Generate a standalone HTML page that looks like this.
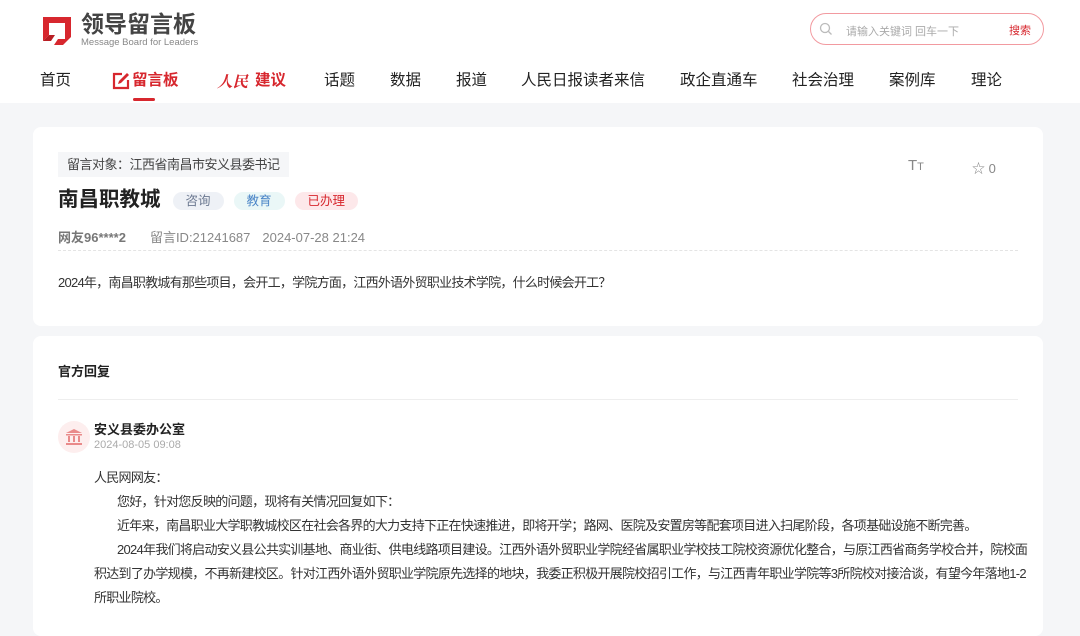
<!DOCTYPE html>
<html><head><meta charset="utf-8"><style>
*{margin:0;padding:0;box-sizing:border-box}
body{width:1080px;height:626px;overflow:hidden;background:#f5f6f8;font-family:"Liberation Sans","Noto Sans CJK SC",sans-serif;color:#333;position:relative}
.hd{position:absolute;left:0;top:0;width:1080px;height:103px;background:#fff}
.a{position:absolute;white-space:nowrap}
.nav{top:71px;font-size:15.5px;color:#222;line-height:20px}
.card{position:absolute;left:33px;width:1010px;background:#fff;border-radius:8px}
.tag{display:inline-block;height:18px;line-height:18px;font-size:12.5px;padding:0 13px;border-radius:9px;font-weight:normal;margin-left:10px;vertical-align:middle;letter-spacing:0}
.p{position:absolute;left:94px;width:960px;font-size:13px;line-height:24px;color:#333;letter-spacing:-0.72px;white-space:nowrap}
</style></head><body>
<div class="hd">
<svg class="a" style="left:40px;top:13px" width="34" height="34" viewBox="0 0 34 34"><path d="M3 4h28v20l-8 8H14l4-6h7V10H9v12l-6 6z" fill="#d7272e"/><path d="M3 28l6-6h6l-4 6z" fill="#b81e24"/></svg>
<div class="a" style="left:81px;top:11px;font-size:23px;font-weight:bold;color:#444;line-height:26px">领导留言板</div>
<div class="a" style="left:81px;top:38px;font-size:9.5px;color:#888;line-height:10px">Message Board for Leaders</div>
<div class="a" style="left:810px;top:13px;width:234px;height:32px;border:1px solid #f29aa0;border-radius:16px"></div>
<svg class="a" style="left:819px;top:22px" width="14" height="14" viewBox="0 0 14 14"><circle cx="6" cy="6" r="4.5" fill="none" stroke="#bbb" stroke-width="1.3"/><path d="M9.5 9.5l3 3" stroke="#bbb" stroke-width="1.3"/></svg>
<div class="a" style="left:846px;top:23px;font-size:11px;color:#aaa">请输入关键词 回车一下</div>
<div class="a" style="left:1009px;top:22px;font-size:11px;color:#d7272e">搜索</div>
<div class="a nav" style="left:40px">首页</div>
<svg class="a" style="left:112px;top:72px" width="18" height="18" viewBox="0 0 18 18"><path d="M10 2H2v14h14V8" fill="none" stroke="#d7272e" stroke-width="2.2"/><path d="M15 1l2 2-8 8-3 1 1-3z" fill="#d7272e"/></svg>
<div class="a nav" style="left:132px;color:#d7272e;font-weight:bold">留言板</div>
<div class="a" style="left:133px;top:98px;width:22px;height:3px;background:#d7272e;border-radius:2px"></div>
<div class="a nav" style="left:217px;color:#d7272e;font-weight:bold;font-style:italic;font-family:'Noto Serif CJK SC',serif">人民</div>
<div class="a nav" style="left:255px;color:#d7272e;font-weight:bold">建议</div>
<div class="a nav" style="left:324px">话题</div>
<div class="a nav" style="left:390px">数据</div>
<div class="a nav" style="left:456px">报道</div>
<div class="a nav" style="left:521px">人民日报读者来信</div>
<div class="a nav" style="left:680px">政企直通车</div>
<div class="a nav" style="left:792px">社会治理</div>
<div class="a nav" style="left:889px">案例库</div>
<div class="a nav" style="left:971px">理论</div>
</div>

<div class="card" style="top:127px;height:199px"></div>
<div class="a" style="left:58px;top:152px;height:25px;line-height:25px;padding:0 9px;background:#f5f6f8;font-size:13px;color:#444;letter-spacing:-0.5px">留言对象：江西省南昌市安义县委书记</div>
<div class="a" style="left:908px;top:157px;font-size:15px;color:#888">T<span style="font-size:11px">T</span></div>
<div class="a" style="left:972px;top:158px;font-size:13px;color:#888">☆ 0</div>
<div class="a" style="left:58px;top:185px;font-size:20.5px;font-weight:bold;color:#222;line-height:30px">南昌职教城<span class="tag" style="margin-left:12px;background:#eef1f6;color:#6b7890">咨询</span><span class="tag" style="background:#eaf7f7;color:#4b85c7">教育</span><span class="tag" style="background:#fde8ea;color:#d7272e">已办理</span></div>
<div class="a" style="left:58px;top:227px;font-size:13px;color:#888"><b style="color:#777">网友96****2</b><span style="margin-left:24px">留言ID:21241687</span><span style="margin-left:12px">2024-07-28 21:24</span></div>
<div class="a" style="left:58px;top:250px;width:960px;border-top:1px dashed #e4e4e4"></div>
<div class="a" style="left:58px;top:272px;font-size:13px;color:#333;letter-spacing:-0.75px">2024年，南昌职教城有那些项目，会开工，学院方面，江西外语外贸职业技术学院，什么时候会开工？</div>

<div class="card" style="top:336px;height:300px"></div>
<div class="a" style="left:58px;top:361px;font-size:13px;font-weight:bold;color:#222">官方回复</div>
<div class="a" style="left:58px;top:399px;width:960px;border-top:1px solid #eee"></div>
<div class="a" style="left:58px;top:421px;width:32px;height:32px;border-radius:16px;background:#fdeeee"></div>
<svg class="a" style="left:64px;top:427px" width="20" height="20" viewBox="0 0 20 20" fill="#e98a8a"><path d="M10 2l8 4H2z"/><rect x="2" y="7" width="16" height="1.5"/><rect x="4" y="9" width="2" height="6"/><rect x="9" y="9" width="2" height="6"/><rect x="14" y="9" width="2" height="6"/><rect x="2" y="16" width="16" height="2"/></svg>
<div class="a" style="left:94px;top:419px;font-size:13px;font-weight:bold;color:#222">安义县委办公室</div>
<div class="a" style="left:94px;top:439px;font-size:11px;color:#aaa">2024-08-05 09:08</div>
<div class="p" style="top:466px">人民网网友：<br>
<span style="padding-left:23px">您好，针对您反映的问题，现将有关情况回复如下：</span><br>
<span style="padding-left:23px">近年来，南昌职业大学职教城校区在社会各界的大力支持下正在快速推进，即将开学；路网、医院及安置房等配套项目进入扫尾阶段，各项基础设施不断完善。</span><br>
<span style="padding-left:23px">2024年我们将启动安义县公共实训基地、商业街、供电线路项目建设。江西外语外贸职业学院经省属职业学校技工院校资源优化整合，与原江西省商务学校合并，院校面</span><br>积达到了办学规模，不再新建校区。针对江西外语外贸职业学院原先选择的地块，我委正积极开展院校招引工作，与江西青年职业学院等3所院校对接洽谈，有望今年落地1-2<br>所职业院校。</div>
</body></html>
